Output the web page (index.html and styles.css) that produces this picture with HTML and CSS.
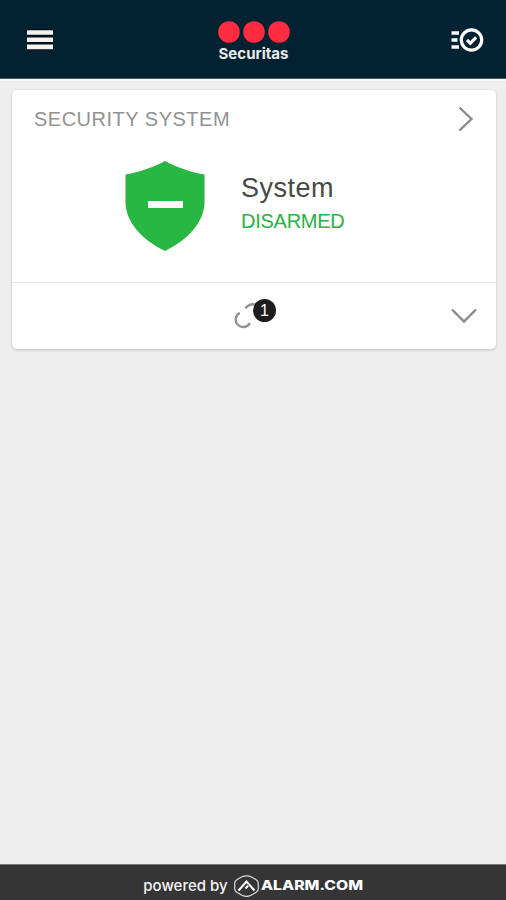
FILE: index.html
```html
<!DOCTYPE html>
<html lang="en">
<head>
<meta charset="utf-8">
<title>Securitas</title>
<link rel="stylesheet" href="styles.css">
</head>
<body>
<header class="topbar">
  <svg class="menu" width="28" height="22" viewBox="0 0 28 22"><path d="M1 3.500h26M1 10.700h26M1 17.900h26" stroke="#000812" stroke-width="6.600"/><path d="M1 3.500h26M1 10.700h26M1 17.900h26" stroke="#f5f2ef" stroke-width="4.600"/></svg>
  <div class="brand">
    <svg width="72" height="22" viewBox="0 0 72 22" fill="#ff2b3f"><circle cx="11" cy="11" r="10.800"/><circle cx="36" cy="11" r="10.800"/><circle cx="61" cy="11" r="10.800"/></svg>
    <span class="brand-name">Securitas</span>
  </div>
  <svg class="activity" width="34" height="26" viewBox="0 0 34 26" fill="none" stroke="#fff"><path d="M1.500 6h7.500M1.500 13h6M1.500 20h7.500" stroke-width="3.400"/><circle cx="21.500" cy="13" r="10.200" stroke-width="3.200"/><path d="M17 13l3.300 3.300 5.800-6" stroke-width="3.200"/></svg>
</header>
<main class="content">
  <section class="card">
    <div class="card-head">
      <h2 class="title">SECURITY SYSTEM</h2>
      <svg width="16" height="26" viewBox="0 0 16 26" fill="none" stroke="#8b8b8b" stroke-width="2.400"><path d="M1.500 1.500L13.500 13 1.500 24.500"/></svg>
    </div>
    <div class="status">
      <svg class="shield" width="80" height="91" viewBox="0 0 80 91"><path d="M40 0C29 6 15 11 .5 13.500V42C1 61 17 79 40 90 63 79 79 61 79.500 42V13.500C65 11 51 6 40 0z" fill="#28b743"/><path d="M23 40h35v7H23z" fill="#fff"/></svg>
      <div class="labels">
        <div class="name">System</div>
        <div class="state">DISARMED</div>
      </div>
    </div>
    <div class="card-foot">
      <div class="alerts">
        <svg width="42" height="32" viewBox="0 0 42 32" fill="none" stroke="#929292" stroke-width="2.400"><path d="M5.800 12.900A7.500 7.500 0 1 0 15.800 23.200M11.500 8.300Q16 2.500 22 5"/></svg>
        <span class="badge">1</span>
      </div>
      <svg class="down" width="26" height="16" viewBox="0 0 26 16" fill="none" stroke="#8b8b8b" stroke-width="2.400"><path d="M1 1.500L13 13.500 25 1.500"/></svg>
    </div>
  </section>
</main>
<footer class="footer">
  <span class="powered">powered by</span>
  <svg width="132" height="22" viewBox="0 0 132 22"><path d="M7 2.200Q12.500-.4 18 2.200L22.200 4.700Q24.300 6 24.300 8.500V13.500Q24.300 16 22.200 17.200L17 20.200Q12.500 22.600 8 20.200L2.800 17.200Q.7 16 .7 13.500V8.500Q.7 6 2.800 4.700z" fill="none" stroke="#ddd" stroke-width="1.200"/><path d="M4.500 15.500L12.500 6.500 20.500 15.500M11.500 13.500L14 10.800" fill="none" stroke="#fff" stroke-width="2"/><text class="wordmark" x="27" y="15" textLength="102" lengthAdjust="spacingAndGlyphs">ALARM.COM</text></svg>
</footer>
</body>
</html>
```
FILE: styles.css
```css
* { box-sizing: border-box; }
body {
  margin: 0;
  height: 900px;
  display: flex;
  flex-direction: column;
  background: #eeeeee;
  font-family: "Liberation Sans", Arial, sans-serif;
}
svg { display: block; flex: none; }
.topbar {
  height: 79px;
  display: grid;
  grid-template-columns: 1fr auto 1fr;
  align-items: center;
  padding: 1px 22px 0;
  background: #032231;
  border-bottom: 1px solid #4d5961;
  box-shadow: 0 2px 0 #f7f7f7;
}
.menu { margin-left: 4px; }
.brand {
  display: flex;
  flex-direction: column;
  align-items: center;
  padding: 4px 0 0;
  margin-left: 1px;
}
.brand-name {
  color: #e9edef;
  font-family: Inter, sans-serif;
  font-size: 15px;
  font-weight: 700;
  line-height: 20px;
  padding-top: 1px;
  margin-bottom: -1px;
  letter-spacing: 0;
  white-space: nowrap;
}
.activity { justify-self: end; }
.content { flex: 1; padding: 11px 10px 0 12px; }
.card {
  height: 259px;
  display: flex;
  flex-direction: column;
  background: #fff;
  border-radius: 5px;
  box-shadow: 0 1px 3px rgba(0, 0, 0, .2);
}
.card-head {
  height: 57px;
  display: flex;
  align-items: center;
  justify-content: space-between;
  padding: 0 22px 0 22px;
}
.title {
  margin: 0;
  padding-top: 1px;
  color: #929292;
  font-size: 20px;
  font-weight: 400;
  letter-spacing: .5px;
}
.status {
  height: 135px;
  display: flex;
  align-items: flex-start;
  padding: 14px 0 0 113px;
}
.labels { margin-left: 36px; padding-top: 11px; }
.name { color: #484848; font-size: 27px; line-height: 32px; letter-spacing: .5px; }
.state { color: #27b443; font-size: 20px; line-height: 34px; letter-spacing: -.25px; }
.card-foot {
  flex: 1;
  display: flex;
  align-items: center;
  justify-content: space-between;
  padding: 0 19px 0 222px;
  border-top: 1px solid #e7e7e7;
}
.alerts { position: relative; }
.badge {
  position: absolute;
  left: 19px;
  top: -1px;
  width: 23px;
  height: 23px;
  border-radius: 50%;
  background: #1d1d1d;
  color: #fff;
  font-size: 16px;
  line-height: 23px;
  text-align: center;
}
.footer {
  height: 36px;
  display: flex;
  align-items: center;
  justify-content: center;
  gap: 6px;
  padding: 6px 0 0 3px;
  background: #353535;
  border-top: 1px solid #777;
}
.powered {
  color: #f4f4f4;
  font-family: Inter, sans-serif;
  font-size: 15px;
  font-weight: 500;
}
.wordmark { fill: #fff; font-family: Inter, sans-serif; font-size: 12.500px; font-weight: 800; }
```
